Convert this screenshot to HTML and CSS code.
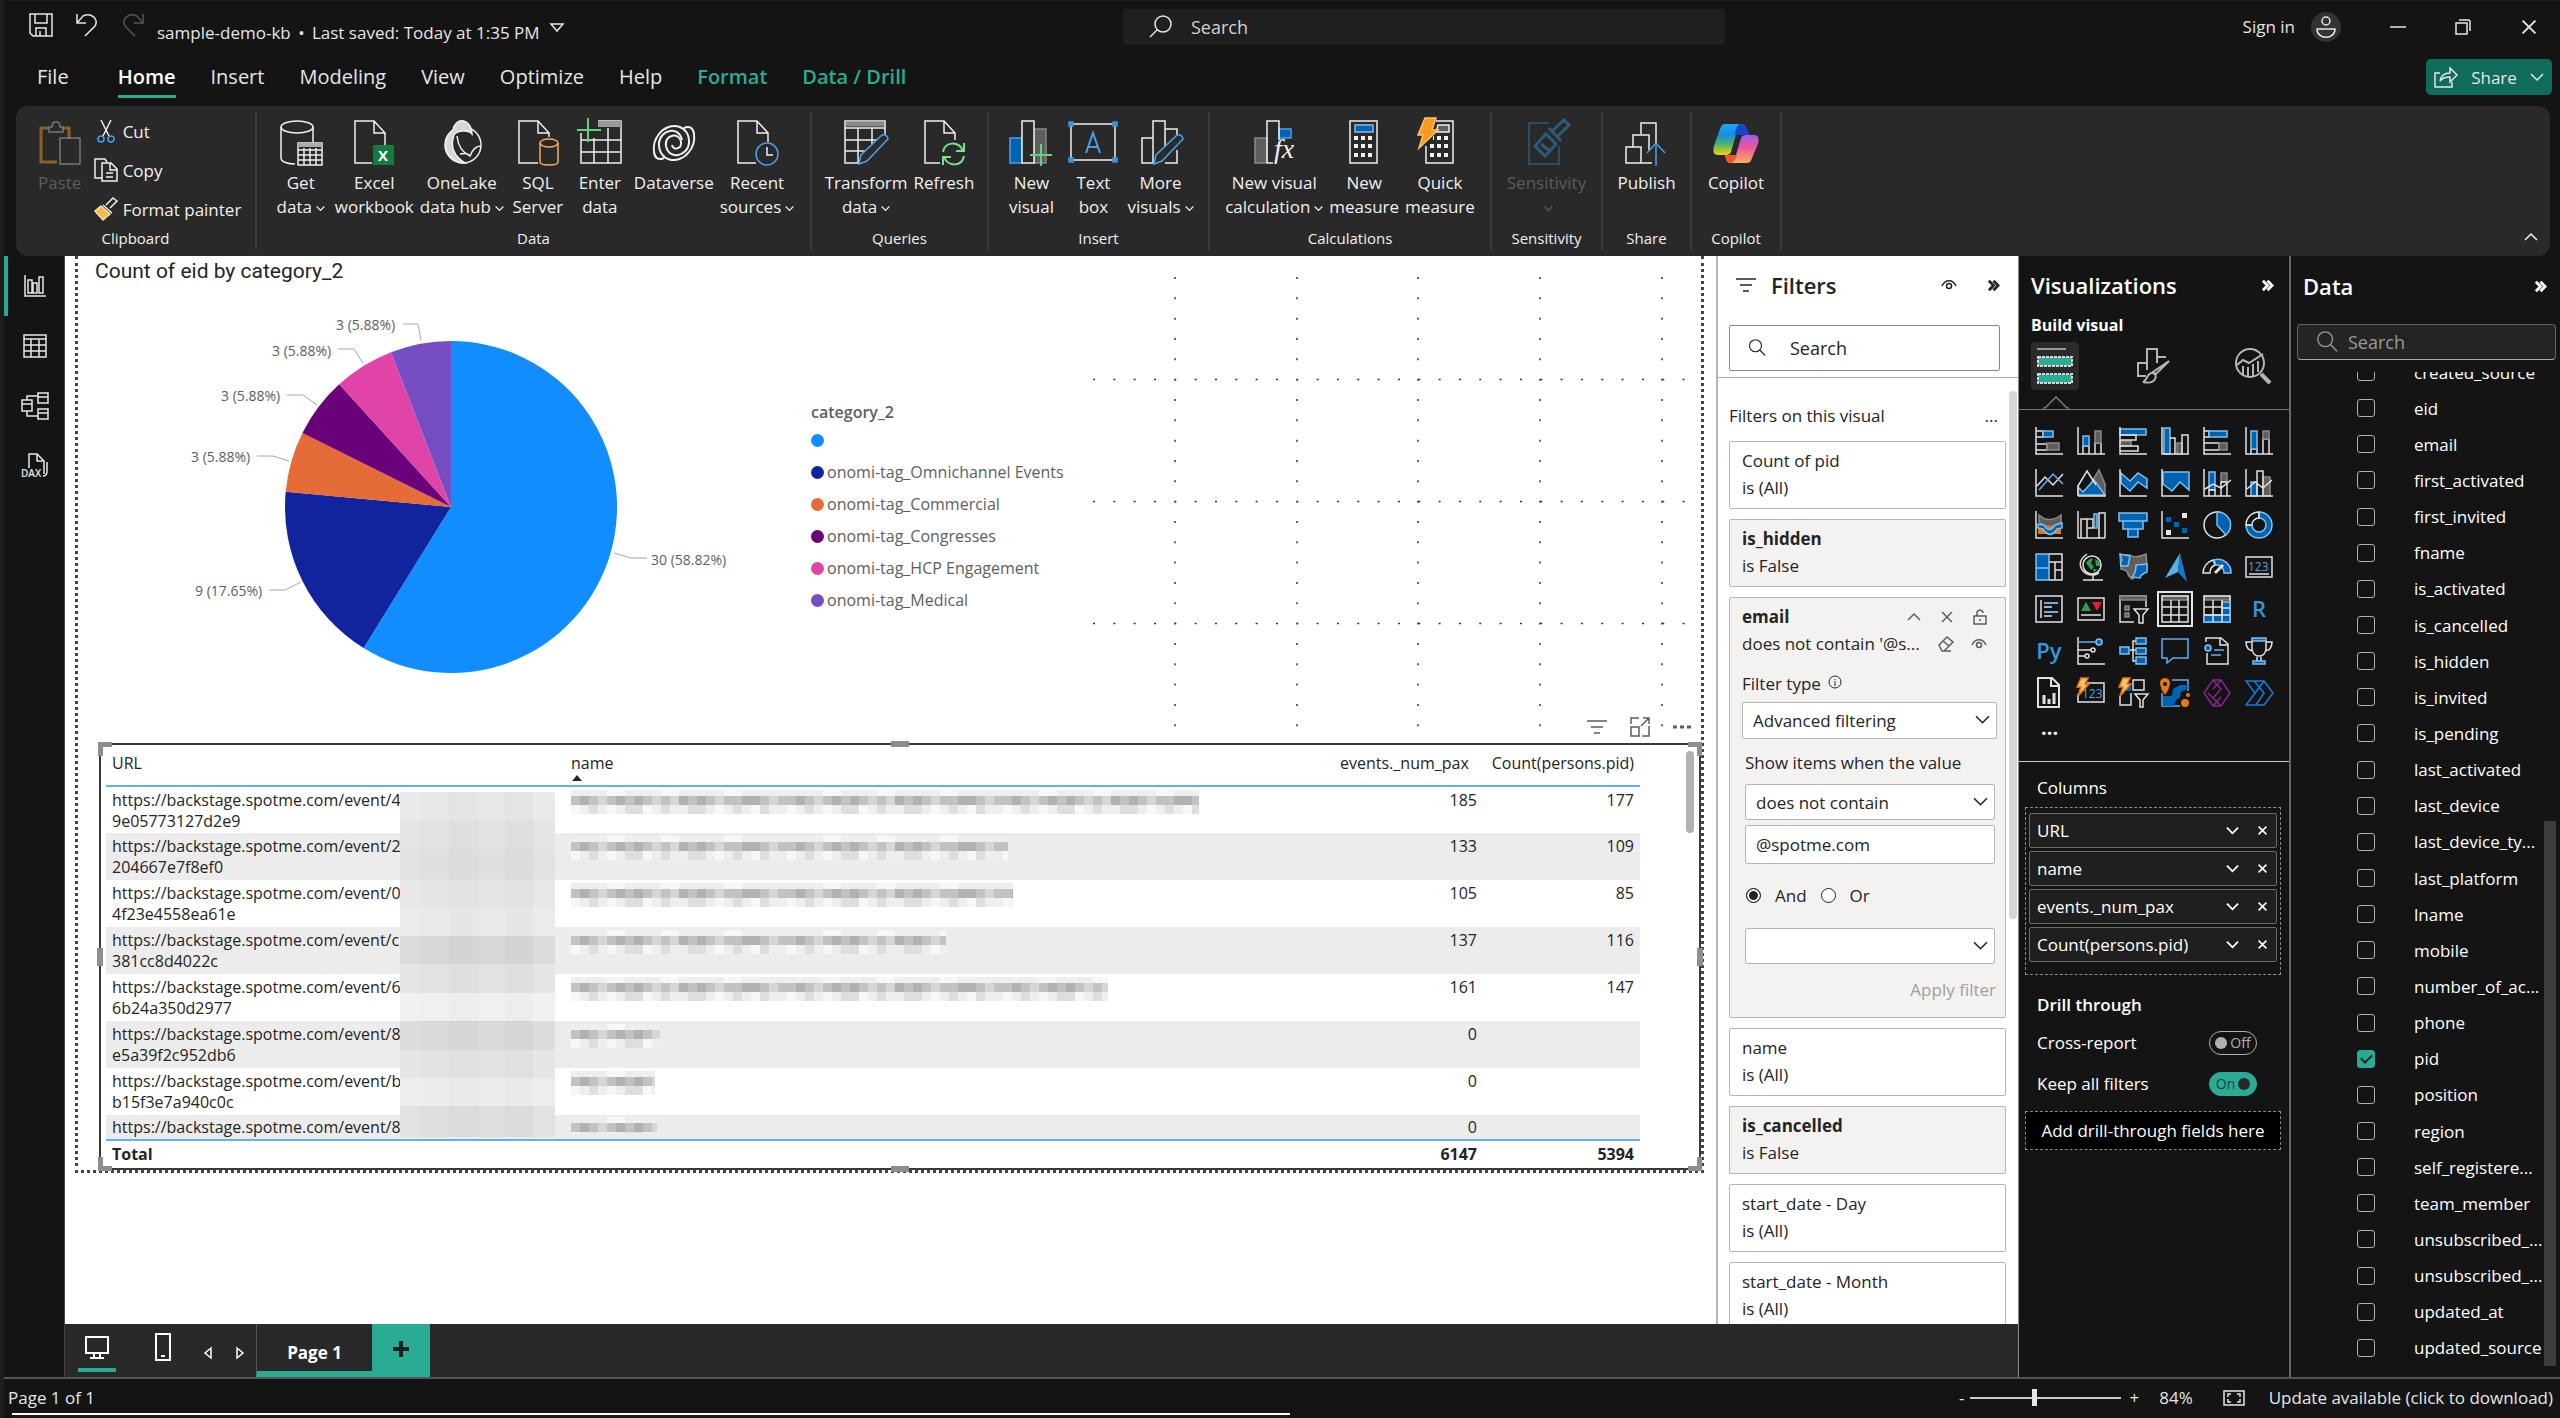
FILE: index.html
```html
<!DOCTYPE html>
<html lang="en">
<head>
    <meta charset="UTF-8">
    <meta name="viewport" content="width=device-width, initial-scale=1.0">
    <title>sample-demo-kb</title>
    <link rel="stylesheet" href="styles.css">
</head>
<body>
    <!-- Shared symbols -->
    <svg class="defs" aria-hidden="true">
        <symbol id="chevron" viewBox="0 0 14 14"><path d="M1 4l6 6 6-6"/></symbol>
        <symbol id="close" viewBox="0 0 14 14"><path d="M2 2l10 10M12 2L2 12"/></symbol>
        <symbol id="collapse" viewBox="0 0 14 14"><path d="M2 2l5 5-5 5M7 2l5 5-5 5"/></symbol>
        <symbol id="lens" viewBox="0 0 24 24"><circle cx="10" cy="9" r="8"/><path d="M16 15l7 7"/></symbol>
        <symbol id="eye" viewBox="0 0 16 12"><path d="M1 7c3-7 11-7 14 0"/><circle cx="8" cy="7" r="2.5"/></symbol>
        <symbol id="funnel" viewBox="0 0 20 16"><path d="M0 2h20M4 8h12M7 14h6"/></symbol>
        <symbol id="bolt" viewBox="0 0 14 20"><path d="M5 1h7l-3 6h4L2 19l3-9H1z"/></symbol>
        <pattern id="mosaic" width="216" height="24" patternUnits="userSpaceOnUse">
            <g class="cells">
                <rect width="216" height="24" fill="#eeeeee"/>
                <rect y="6" width="216" height="9" fill="#c4c2c1"/>
                <path fill="#b2b0b0" d="M9 6h9v9H9zM45 6h9v9h-9zM63 6h9v9h-9zM108 6h9v9h-9zM126 6h9v9h-9zM171 6h18v9h-18z"/>
                <path fill="#d8d6d4" d="M27 6h9v9h-9zM81 6h9v9h-9zM99 6h9v9h-9zM144 6h9v9h-9zM198 6h9v9h-9z"/>
                <path fill="#dedede" d="M18 15h9v9h-9zM54 15h18v9H54zM90 15h9v9h-9zM117 15h18v9h-18zM162 15h9v9h-9zM189 15h9v9h-9z"/>
                <path fill="#f7f7f7" d="M0 15h9v9H0zM36 15h9v9h-9zM72 15h9v9h-9zM144 15h9v9h-9zM180 15h9v9h-9zM36 0h18v6H36zM90 0h18v6H90zM153 0h18v6h-18z"/>
            </g>
        </pattern>
        <linearGradient id="cp1" x1="0" y1="0" x2="0" y2="1"><stop offset="0" stop-color="#1ea7f5"/><stop offset=".35" stop-color="#1b8be0"/><stop offset=".65" stop-color="#4fb36b"/><stop offset="1" stop-color="#f4cf17"/></linearGradient>
        <linearGradient id="cp2" x1="0" y1="0" x2="0" y2="1"><stop offset="0" stop-color="#a35bf0"/><stop offset=".45" stop-color="#ee559b"/><stop offset="1" stop-color="#ffb05e"/></linearGradient>
    </svg>

    <header class="title-bar">
        <div class="quick-access">
            <button class="icon-btn" aria-label="Save"><svg width="24" height="24" viewBox="0 0 24 24"><path d="M1 1h22v22H4l-3-3zM6 1v9h12V1M7 23v-8h10v8M11 18v5"/></svg></button>
            <button class="icon-btn" aria-label="Undo"><svg width="24" height="24" viewBox="0 0 24 24"><path d="M2 1v9h9M2 10l6-7c8-4 16 3 12 10L10 23"/></svg></button>
            <button class="icon-btn dim" aria-label="Redo"><svg width="24" height="24" viewBox="0 0 24 24"><path d="M22 1v9h-9M22 10l-6-7C8-1 0 6 4 13l10 10"/></svg></button>
        </div>
        <div class="doc-name">sample-demo-kb <span class="bullet">•</span> Last saved: Today at 1:35 PM
            <svg width="14" height="10" viewBox="0 0 14 10"><path d="M1 1h12L7 8z"/></svg>
        </div>
        <label class="top-search"><svg class="flip" width="24" height="24"><use href="#lens"/></svg><input type="text" placeholder="Search" aria-label="Search"></label>
        <div class="window-controls">
            <a href="#" class="sign-in">Sign in</a>
            <span class="avatar"><svg width="30" height="30" viewBox="0 0 30 30"><circle cx="15" cy="9" r="4"/><path d="M6 17h18c0 11-18 11-18 0z"/></svg></span>
            <button class="icon-btn" aria-label="Minimize"><svg width="16" height="16" viewBox="0 0 16 16"><path d="M0 8h16"/></svg></button>
            <button class="icon-btn" aria-label="Restore"><svg width="16" height="16" viewBox="0 0 16 16"><path d="M1 4h11v11H1zM4 1h9q2 0 2 2v9"/></svg></button>
            <button class="icon-btn" aria-label="Close"><svg width="18" height="18"><use href="#close"/></svg></button>
        </div>
    </header>

    <nav class="menu">
        <a href="#">File</a>
        <a href="#" class="active">Home</a>
        <a href="#">Insert</a>
        <a href="#">Modeling</a>
        <a href="#">View</a>
        <a href="#">Optimize</a>
        <a href="#">Help</a>
        <a href="#" class="context">Format</a>
        <a href="#" class="context">Data / Drill</a>
        <button class="share-btn"><svg width="24" height="22" viewBox="0 0 24 22"><path d="M6 7H1v14h17v-5M6 15c1-6 5-8 10-8V2l7 7-7 7v-5c-5 0-8 1-10 4z"/></svg>Share<svg width="14" height="14"><use href="#chevron"/></svg></button>
    </nav>

    <section class="ribbon">
        <div class="group clipboard">
            <div class="tools">
                <button class="tool disabled"><svg width="44" height="46" viewBox="0 0 44 46"><path d="M10 8H3v34h16M24 8h7v11" stroke="#8a6127" stroke-width="3"/><path d="M11 12V7h3c0-7 8-7 8 0h3v5zM22 18h20v26H22z" stroke="#777"/></svg><span>Paste</span></button>
                <div class="stack">
                    <button class="row-tool"><svg width="24" height="24" viewBox="0 0 24 24"><path d="M7 1l8 16M17 1L9 17"/><circle cx="7" cy="20" r="3" stroke="#4aa0e6"/><circle cx="17" cy="20" r="3" stroke="#4aa0e6"/></svg>Cut</button>
                    <button class="row-tool"><svg width="24" height="24" viewBox="0 0 24 24"><path d="M8 20H1V1h10l2 3M8 5h9l6 6v12H8zM16 5v7h7M12 15h7M12 19h7"/></svg>Copy</button>
                    <button class="row-tool"><svg width="24" height="24" viewBox="0 0 24 24"><path d="M12 8l7-7 4 3-7 7M9 8l9 8"/><path d="M7 9l9 8-7 6-8-9z" fill="#f5b94d" stroke="#fbe3b4"/></svg>Format painter</button>
                </div>
            </div>
            <h3>Clipboard</h3>
        </div>
        <div class="group data">
            <div class="tools">
                <button class="tool"><svg width="44" height="46" viewBox="0 0 44 46"><ellipse cx="18" cy="7" rx="16" ry="6"/><path d="M2 7v31c0 4 7 6 14 6M34 7v15"/><path d="M19 23h24v22H19zM19 30h24M19 35h24M19 40h24M25 28v17M31 28v17M37 28v17"/><path d="M19 25h24" stroke-width="4" stroke="#aaa"/></svg><span>Get<br>data<svg class="caret"><use href="#chevron"/></svg></span></button>
                <button class="tool"><svg width="44" height="46" viewBox="0 0 44 46"><path d="M20 43H3V1h19l11 12v12M22 1v12h11"/><path d="M21 25h21v20H21z" fill="#107c41" stroke="none"/><text x="26" y="41" class="badge-letter">X</text></svg><span>Excel<br>workbook</span></button>
                <button class="tool"><svg width="44" height="46" viewBox="0 0 44 46"><circle cx="23" cy="25" r="18"/><path d="M13 10c-10 8-10 22 0 29 5 4 10 4 12 4C14 36 10 26 14 15c2-4 14-6 18-1-1-17-17-17-19-4z" fill="#d6d6d6"/><path d="M17 16c1 10 6 17 13 20 3-8 8-10 11-10M20 34c4-1 8-1 10 2"/></svg><span>OneLake<br>data hub<svg class="caret"><use href="#chevron"/></svg></span></button>
                <button class="tool"><svg width="44" height="46" viewBox="0 0 44 46"><path d="M22 43H3V1h19l11 12v4M22 1v12h11"/><ellipse cx="33" cy="23" rx="9" ry="4" stroke="#f3ad57"/><path d="M24 23v19c0 4 18 4 18 0V23" stroke="#f3ad57"/></svg><span>SQL<br>Server</span></button>
                <button class="tool"><svg width="44" height="46" viewBox="0 0 44 46"><path d="M3 13v30h40V1H20M3 20h40M3 32h40M16 18v25M30 8v35"/><path d="M20 4h23" stroke="#999" stroke-width="6"/><path d="M10-2v24M-1 10h24" stroke="#62d27c" stroke-width="2"/></svg><span>Enter<br>data</span></button>
                <button class="tool"><svg width="44" height="46" viewBox="0 0 44 46"><path d="M12 38C0 44-1 24 7 14 18 0 38 5 37 23c-1 13-20 18-23 3-2-12 14-14 15-4 1 7-8 9-9 3" stroke-width="2"/><path d="M32 8c12-6 13 14 5 24C26 46 6 41 7 23 8 10 27 5 30 20" stroke-width="2"/></svg><span>Dataverse</span></button>
                <button class="tool"><svg width="44" height="46" viewBox="0 0 44 46"><path d="M21 43H3V1h19l11 12v9M22 1v12h11"/><circle cx="32" cy="34" r="11" stroke="#4aa0e6"/><path d="M32 27v8h6"/></svg><span>Recent<br>sources<svg class="caret"><use href="#chevron"/></svg></span></button>
            </div>
            <h3>Data</h3>
        </div>
        <div class="group queries">
            <div class="tools">
                <button class="tool"><svg width="44" height="46" viewBox="0 0 44 46"><path d="M17 43H1V1h40v16M1 8h40M1 20h38M1 31h22M14 8v35M28 8v18"/><path d="M2 4h38" stroke="#888" stroke-width="5"/><path d="M15 44l2-9 21-20q5-1 6 4L23 41z" fill="#2b2b2b" stroke="#4aa0e6"/></svg><span>Transform<br>data<svg class="caret"><use href="#chevron"/></svg></span></button>
                <button class="tool"><svg width="44" height="46" viewBox="0 0 44 46"><path d="M18 43H3V1h19l11 12v7M22 1v12h11"/><path d="M21 32c2-11 16-11 20-1M42 23v8h-8M42 36c-2 11-16 11-20 1M21 45v-8h8" stroke="#7be08a" stroke-width="2"/></svg><span>Refresh</span></button>
            </div>
            <h3>Queries</h3>
        </div>
        <div class="group insert">
            <div class="tools">
                <button class="tool"><svg width="44" height="46" viewBox="0 0 44 46"><path d="M1 18h12v25H1z" fill="#0063b1" stroke="#4aa0e6"/><path d="M25 9h12v34H25z" fill="#605e5c" stroke="#888"/><path d="M13 1h12v42H13z" fill="#292929"/><path d="M32 24v22M21 35h22" stroke="#62d27c" stroke-width="2"/></svg><span>New<br>visual</span></button>
                <button class="tool"><svg width="44" height="46" viewBox="0 0 44 46"><path d="M0 4h44v36H0z"/><path d="M15 33l7-20 7 20M17 27h10" stroke="#4aa0e6" stroke-width="2"/><path d="M-2 2h4v4h-4zM42 2h4v4h-4zM-2 38h4v4h-4zM42 38h4v4h-4z" fill="#3a96dd" stroke="#3a96dd"/></svg><span>Text<br>box</span></button>
                <button class="tool"><svg width="44" height="46" viewBox="0 0 44 46"><path d="M14 43H3V18h11M14 43V1h12v26M26 9h12v8M38 30v13H26"/><path d="M15 44l2-9 21-20q5-1 6 4L23 41z" fill="#2b2b2b" stroke="#4aa0e6"/></svg><span>More<br>visuals<svg class="caret"><use href="#chevron"/></svg></span></button>
            </div>
            <h3>Insert</h3>
        </div>
        <div class="group calculations">
            <div class="tools">
                <button class="tool"><svg width="44" height="46" viewBox="0 0 44 46"><path d="M3 18h12v25H3z" fill="#605e5c" stroke="#888"/><path d="M27 9h12v9H27z" fill="#0063b1" stroke="#4aa0e6"/><path d="M15 43V1h12v19M15 43h6"/><text x="22" y="38" class="fx">fx</text></svg><span>New visual<br>calculation<svg class="caret"><use href="#chevron"/></svg></span></button>
                <button class="tool"><svg width="44" height="46" viewBox="0 0 44 46"><path d="M8 1h27v42H8z"/><path d="M13 5h18v7H13z" fill="#0063b1" stroke="#83beec"/><path d="M12 18h4m3 0h4m3 0h4M12 26h4m3 0h4m3 0h4M12 35h4m3 0h4m3 0h4" stroke-width="4"/></svg><span>New<br>measure</span></button>
                <button class="tool"><svg width="44" height="46" viewBox="0 0 44 46"><path d="M18 1h17v42H8V26"/><path d="M20 5h11v7H18z" fill="#605e5c"/><path d="M15 18h1m3 0h4m3 0h4M12 26h4m3 0h4m3 0h4M12 35h4m3 0h4m3 0h4" stroke-width="4"/><path d="M7-2h11l-4 12h6L1 28l4-13H0z" fill="#f59b23" stroke="#ffc36b"/></svg><span>Quick<br>measure</span></button>
            </div>
            <h3>Calculations</h3>
        </div>
        <div class="group sensitivity">
            <div class="tools">
                <button class="tool disabled"><svg width="44" height="46" viewBox="0 0 44 46"><path d="M34 26v18H4V3h20" stroke="#2c5a7a"/><path d="M10 26l11-12 10 10-11 12zM16 24l10 8M27 11l12-11 5 5-12 12M24 8l12 13" stroke="#2c5a7a" stroke-width="3"/></svg><span>Sensitivity<br><svg class="caret"><use href="#chevron"/></svg></span></button>
            </div>
            <h3>Sensitivity</h3>
        </div>
        <div class="group share">
            <div class="tools">
                <button class="tool"><svg width="44" height="46" viewBox="0 0 44 46"><path d="M17 14V3h15v20M9 27V15h16v15M2 43V27h15v16zM17 43h11"/><path d="M32 46V25M23 33l9-10 9 10" stroke="#4aa0e6"/></svg><span>Publish</span></button>
            </div>
            <h3>Share</h3>
        </div>
        <div class="group copilot">
            <div class="tools">
                <button class="tool"><svg width="46" height="46" viewBox="0 0 46 46"><path d="M13 4h15c4 0 5 3 6 7l1 4H23l-5 17c-1 2-2 3-5 3H5c-5 0-5-4-4-9l6-17c1-3 2-5 6-5z" fill="url(#cp1)" stroke="none"/><path d="M28 4c-4 0-5 4-6 11h15l-3-6c-1-4-3-5-6-5z" fill="#1745c9" stroke="none"/><path d="M33 43H18c-4 0-5-3-6-8h11l5-17c1-2 2-3 5-3h8c5 0 5 4 4 9l-6 14c-1 3-2 5-6 5z" fill="url(#cp2)" stroke="none"/><path d="M12 35c1 5 2 8 6 8 3 0 4-4 6-8z" fill="#f2542d" stroke="none"/><path d="M24 15h4l-6 20h-4z" fill="#292929" stroke="none"/></svg><span>Copilot</span></button>
            </div>
            <h3>Copilot</h3>
        </div>
        <button class="collapse-ribbon" aria-label="Collapse ribbon"><svg class="up" width="14" height="14"><use href="#chevron"/></svg></button>
    </section>

    <main class="main">
        <nav class="rail">
            <a href="#" class="active" aria-label="Report view"><svg width="24" height="24" viewBox="0 0 24 24"><path d="M2 1v21h21M5 19V6h4v13zM10 19V9h4v10zM16 19V3h4v16z"/></svg></a>
            <a href="#" aria-label="Table view"><svg width="24" height="24" viewBox="0 0 24 24"><path d="M1 1h22v22H1zM1 5h22M1 11h22M1 17h22M8 5v18M16 5v18"/></svg></a>
            <a href="#" aria-label="Model view"><svg width="28" height="28" viewBox="0 0 28 28"><path d="M1 8h10v11H1zM1 12h10M17 1h10v10H17zM17 5h10M17 17h10v10H17zM17 21h10M6 8V4h11M6 19v5h11"/></svg></a>
            <a href="#" aria-label="DAX query view"><svg width="28" height="28" viewBox="0 0 28 28"><path d="M8 16V2h8l7 7v13M16 2v7h6M26 10v9q0 5-4 5"/><text x="0" y="25" class="dax">DAX</text></svg></a>
        </nav>

        <div class="workspace">
            <div class="work-row">
                <div class="canvas">
                    <div class="report-page">
                        <div class="page-top">
                            <div class="pie-visual">
                                <h2>Count of eid by category_2</h2>
                                <svg class="pie" width="712" height="440" viewBox="79 286 712 440">
                                    <path fill="#118dff" d="M452 507V341A166 166 0 1 1 364.6 648.1z"/>
                                    <path fill="#12239e" d="M452 507L364.6 648.1A166 166 0 0 1 286.7 491.7z"/>
                                    <path fill="#e66c37" d="M452 507L286.7 491.7A166 166 0 0 1 303.4 433z"/>
                                    <path fill="#6b007b" d="M452 507L303.4 433A166 166 0 0 1 340.2 384.3z"/>
                                    <path fill="#e044a7" d="M452 507L340.2 384.3A166 166 0 0 1 392 352.2z"/>
                                    <path fill="#744ec2" d="M452 507L392 352.2A166 166 0 0 1 452 341z"/>
                                    <path class="leader" d="M404 324h15l3 16M339 349h16l9 14M288 395h16l14 10M258 456h16l16 5M270 590h16l16-8M615 553l17 5h16"/>
                                    <text x="337" y="330">3 (5.88%)</text>
                                    <text x="273" y="356">3 (5.88%)</text>
                                    <text x="222" y="401">3 (5.88%)</text>
                                    <text x="192" y="462">3 (5.88%)</text>
                                    <text x="196" y="596">9 (17.65%)</text>
                                    <text x="652" y="565">30 (58.82%)</text>
                                </svg>
                            </div>
                            <div class="legend">
                                <h4>category_2</h4>
                                <ul>
                                    <li class="c1">&nbsp;</li>
                                    <li class="c2">onomi-tag_Omnichannel Events</li>
                                    <li class="c3">onomi-tag_Commercial</li>
                                    <li class="c4">onomi-tag_Congresses</li>
                                    <li class="c5">onomi-tag_HCP Engagement</li>
                                    <li class="c6">onomi-tag_Medical</li>
                                </ul>
                            </div>
                            <svg class="map-grid" width="614" height="488" viewBox="0 0 614 488">
                                <path d="M88 21v450M210 21v450M331 21v450M453 21v450M575 21v450M6 123.500h592M6 245.500h592M6 367.500h592"/>
                            </svg>
                        </div>

                        <div class="table-visual">
                            <div class="visual-header">
                                <svg width="20" height="16"><use href="#funnel"/></svg>
                                <svg width="20" height="20" viewBox="0 0 20 20"><path d="M9 1H1v6M19 9v10h-7M1 10h8v9H1zM11 9l8-8M13 1h6v6"/></svg>
                                <svg width="18" height="4" viewBox="0 0 18 4"><path d="M0 2h4m3 0h4m3 0h4" stroke-width="3"/></svg>
                            </div>
                            <table>
                                <thead>
                                    <tr><th class="url">URL</th><th class="name">name<i class="sort"></i></th><th class="num head-pax">events._num_pax</th><th class="num">Count(persons.pid)</th></tr>
                                </thead>
                                <tbody>
                                    <tr><td>https://backstage.spotme.com/event/4<br>9e05773127d2e9</td><td><svg class="redacted" width="628" height="24"><rect width="100%" height="24" fill="url(#mosaic)"/></svg></td><td class="num">185</td><td class="num">177</td></tr>
                                    <tr><td>https://backstage.spotme.com/event/2<br>204667e7f8ef0</td><td><svg class="redacted" width="437" height="24"><rect width="100%" height="24" fill="url(#mosaic)"/></svg></td><td class="num">133</td><td class="num">109</td></tr>
                                    <tr><td>https://backstage.spotme.com/event/0<br>4f23e4558ea61e</td><td><svg class="redacted" width="442" height="24"><rect width="100%" height="24" fill="url(#mosaic)"/></svg></td><td class="num">105</td><td class="num">85</td></tr>
                                    <tr><td>https://backstage.spotme.com/event/c<br>381cc8d4022c</td><td><svg class="redacted" width="375" height="24"><rect width="100%" height="24" fill="url(#mosaic)"/></svg></td><td class="num">137</td><td class="num">116</td></tr>
                                    <tr><td>https://backstage.spotme.com/event/6<br>6b24a350d2977</td><td><svg class="redacted" width="537" height="24"><rect width="100%" height="24" fill="url(#mosaic)"/></svg></td><td class="num">161</td><td class="num">147</td></tr>
                                    <tr><td>https://backstage.spotme.com/event/8<br>e5a39f2c952db6</td><td><svg class="redacted" width="89" height="24"><rect width="100%" height="24" fill="url(#mosaic)"/></svg></td><td class="num">0</td><td></td></tr>
                                    <tr><td>https://backstage.spotme.com/event/b<br>b15f3e7a940c0c</td><td><svg class="redacted" width="84" height="24"><rect width="100%" height="24" fill="url(#mosaic)"/></svg></td><td class="num">0</td><td></td></tr>
                                    <tr class="cut"><td>https://backstage.spotme.com/event/8</td><td><svg class="redacted" width="86" height="16"><rect width="100%" height="16" fill="url(#mosaic)"/></svg></td><td class="num">0</td><td></td></tr>
                                </tbody>
                                <tfoot>
                                    <tr><td>Total</td><td></td><td class="num">6147</td><td class="num">5394</td></tr>
                                </tfoot>
                            </table>
                            <svg class="url-mask" width="155" height="345" viewBox="0 0 155 345">
                                <path fill="#e5e7e9" d="M0 0h155v29H0z"/><path fill="#e2e2e1" d="M0 29h155v29H0z"/><path fill="#e0dfde" d="M0 58h155v29H0z"/><path fill="#e5e5e5" d="M0 87h155v28H0z"/>
                                <path fill="#e9e9e9" d="M0 115h155v29H0z"/><path fill="#d8d7d6" d="M0 144h155v28H0z"/><path fill="#e2e2e2" d="M0 172h155v29H0z"/><path fill="#f0f0f0" d="M0 201h155v28H0z"/>
                                <path fill="#d9d9d9" d="M0 229h155v29H0z"/><path fill="#e3e3e3" d="M0 258h155v28H0z"/><path fill="#ececeb" d="M0 286h155v28H0z"/><path fill="#dddee0" d="M0 314h155v31H0z"/>
                                <path fill="#fff" fill-opacity=".12" d="M0 0h20v345H0zM133 0h22v345h-22z"/><path fill="#000" fill-opacity=".01" d="M49 0h29v345H49zM105 0h28v345h-28z"/>
                            </svg>
                            <i class="thumb"></i>
                            <i class="handle tl"></i><i class="handle tr"></i><i class="handle bl"></i><i class="handle br"></i>
                            <i class="handle top"></i><i class="handle bottom"></i><i class="handle left"></i><i class="handle right"></i>
                        </div>
                    </div>
                </div>

                <aside class="filters">
                    <div class="filters-head">
                        <div class="pane-title"><svg width="20" height="16"><use href="#funnel"/></svg><h2>Filters</h2><svg width="16" height="12"><use href="#eye"/></svg><button class="icon-btn" aria-label="Collapse filters"><svg width="13" height="13"><use href="#collapse"/></svg></button></div>
                        <label class="filter-search"><svg width="18" height="18"><use href="#lens"/></svg><input type="text" placeholder="Search" aria-label="Search filters"></label>
                    </div>
                    <div class="filters-body">
                        <div class="section-label"><span>Filters on this visual</span><span>...</span></div>
                        <div class="card"><p>Count of pid</p><p>is (All)</p></div>
                        <div class="card set"><p>is_hidden</p><p>is False</p></div>
                        <div class="card set open">
                            <div class="card-line"><p>email</p><svg class="up" width="14" height="14"><use href="#chevron"/></svg><svg width="14" height="14"><use href="#close"/></svg><svg width="14" height="16" viewBox="0 0 14 16"><path d="M1 7h12v8H1zM4 7V3q3-4 6 0v1M7 10v2"/></svg></div>
                            <div class="card-line second"><p>does not contain '@s...</p><svg width="16" height="16" viewBox="0 0 16 16"><path d="M1 9l8-8 6 5-9 9H4zM5 5l6 5M5 15h8"/></svg><svg width="16" height="12"><use href="#eye"/></svg></div>
                            <label class="field-label" for="filterType">Filter type <svg width="15" height="15" viewBox="0 0 15 15"><circle cx="7" cy="7" r="6"/><path d="M7 4v1M7 6v5"/></svg></label>
                            <div class="select"><select id="filterType"><option>Advanced filtering</option></select><svg width="15" height="15"><use href="#chevron"/></svg></div>
                            <div class="condition">
                                <label class="field-label" for="op1">Show items when the value</label>
                                <div class="select"><select id="op1"><option>does not contain</option></select><svg width="15" height="15"><use href="#chevron"/></svg></div>
                                <input class="value" type="text" value="@spotme.com" aria-label="Value">
                                <div class="radios"><label><input type="radio" name="join" checked>And</label><label><input type="radio" name="join">Or</label></div>
                                <div class="select"><select aria-label="Second condition"><option></option></select><svg width="15" height="15"><use href="#chevron"/></svg></div>
                                <button class="apply" disabled>Apply filter</button>
                            </div>
                        </div>
                        <div class="card"><p>name</p><p>is (All)</p></div>
                        <div class="card set"><p>is_cancelled</p><p>is False</p></div>
                        <div class="card"><p>start_date - Day</p><p>is (All)</p></div>
                        <div class="card"><p>start_date - Month</p><p>is (All)</p></div>
                        <i class="pane-thumb"></i>
                    </div>
                </aside>
            </div>

            <footer class="page-tabs">
                <button class="layout-btn active" aria-label="Desktop layout"><svg width="26" height="26" viewBox="0 0 26 26"><path d="M2 2h22v16H2zM10 18v5M16 18v5M6 23h14" stroke-width="2"/></svg></button>
                <button class="layout-btn phone" aria-label="Mobile layout"><svg width="16" height="28" viewBox="0 0 16 28"><path d="M1 1h14v26H1zM6 23h4" stroke-width="2"/></svg></button>
                <button class="arrow" aria-label="Previous page"><svg width="8" height="12" viewBox="0 0 8 12"><path d="M7 1v10L1 6z"/></svg></button>
                <button class="arrow" aria-label="Next page"><svg width="8" height="12" viewBox="0 0 8 12"><path d="M1 1v10l6-5z"/></svg></button>
                <button class="page-tab">Page 1</button>
                <button class="add-page" aria-label="New page"><svg width="16" height="16" viewBox="0 0 16 16"><path d="M8 0v16M0 8h16" stroke-width="4"/></svg></button>
            </footer>
        </div>

        <aside class="viz">
            <div class="pane-title"><h2>Visualizations</h2><button class="icon-btn" aria-label="Collapse visualizations"><svg width="13" height="13"><use href="#collapse"/></svg></button></div>
            <h3>Build visual</h3>
            <div class="viz-tabs">
                <button class="active" aria-label="Build visual"><svg width="36" height="36" viewBox="0 0 36 36"><path d="M0 1h29" stroke="#999" stroke-width="2"/><path d="M1 9h34v9H1zM1 26h34v9H1z" fill="#2aac94" stroke="#d6d6d6" stroke-width="2" stroke-dasharray="3 1"/></svg></button>
                <button aria-label="Format visual"><svg width="34" height="36" viewBox="0 0 34 36"><path d="M9 28H1V15h9M10 22V1h10v14M20 9h9" stroke-width="2"/><path d="M32 13L19 26l-3-2zM15 25c3 0 5 3 3 6-2 4-8 4-12 3 4-1 4-9 9-9z" stroke-width="2"/></svg></button>
                <button aria-label="Analytics"><svg width="36" height="36" viewBox="0 0 36 36"><circle cx="15" cy="15" r="14" stroke-width="2"/><path d="M2 17l6-5 6 3 14-9M8 18v9M13 19v9M18 16v12M23 13v11" stroke-width="2"/><path d="M26 26l9 9" stroke-width="4"/></svg></button>
            </div>
            <svg class="notch" width="26" height="13" viewBox="0 0 26 13"><path d="M0 12h2L13 1l11 11h2"/></svg>
            <div class="viz-grid">
                <button aria-label="Stacked bar"><svg viewBox="0 0 28 28"><path d="M1 0v27h27M1 4h7v6H1M1 17h11v6H1"/><path class="b" d="M8 4h10v6H8z"/><path class="g" d="M12 16h12v7H12z"/></svg></button>
                <button aria-label="Stacked column"><svg viewBox="0 0 28 28"><path d="M1 0v27h27M6 27v-8h6v8M18 27V16h6v11"/><path class="b" d="M6 9h6v10H6z"/><path class="g" d="M18 4h6v12h-6z"/></svg></button>
                <button aria-label="Clustered bar"><svg viewBox="0 0 28 28"><path class="b" d="M1 2h26v6H1z"/><path class="g" d="M1 14h11v5H1z"/><path d="M1 0v27h27M1 8h16v5H1M1 19h18v5H1"/></svg></button>
                <button aria-label="Clustered column"><svg viewBox="0 0 28 28"><path class="b" d="M3 1h6v26H3z"/><path class="g" d="M16 16h5v11h-5z"/><path d="M1 0v27h27M9 11h5v16M21 27V8h6v19"/></svg></button>
                <button aria-label="100% stacked bar"><svg viewBox="0 0 28 28"><path d="M1 0v27h27M1 4h5v6H1M1 16h15v7H1"/><path class="b" d="M6 4h18v6H6z"/><path class="g" d="M16 16h8v7h-8z"/></svg></button>
                <button aria-label="100% stacked column"><svg viewBox="0 0 28 28"><path d="M1 0v27h27M6 27v-5h6v5M18 27V12h6v15"/><path class="b" d="M6 4h6v18H6z"/><path class="g" d="M18 4h6v8h-6z"/></svg></button>

                <button aria-label="Line"><svg viewBox="0 0 28 28"><path d="M1 0v27h27M2 17l8-9 8 8L28 5"/><path class="bs" d="M4 21L18 5l10 10"/></svg></button>
                <button aria-label="Area"><svg viewBox="0 0 28 28"><path class="g" d="M13 16l9-15 6 14v12z"/><path class="b" d="M1 18l5 5 11-12 11 15H1z"/><path d="M1 27V17L10 2l9 14M1 27h27"/></svg></button>
                <button aria-label="Stacked area"><svg viewBox="0 0 28 28"><path class="b" d="M2 4l9 8 8-8 9 6v9l-9-6-8 9-9-8z"/><path d="M1 0v27h27"/></svg></button>
                <button aria-label="100% stacked area"><svg viewBox="0 0 28 28"><path class="b" d="M2 3h26v18l-9-8-8 9-9-7z"/><path d="M1 0v27h27"/></svg></button>
                <button aria-label="Line and stacked column"><svg viewBox="0 0 28 28"><path class="b" d="M6 3h6v18H6z"/><path class="g" d="M18 4h6v9h-6z"/><path d="M1 0v27h27M6 27v-6h6v6M18 27V13h6v14M2 20l8-5 8 4 10-8"/></svg></button>
                <button aria-label="Line and clustered column"><svg viewBox="0 0 28 28"><path class="b" d="M6 13h6v14H6z"/><path class="g" d="M18 8h7v19h-7z"/><path d="M1 0v27h27M12 27V2h6v25M2 20l8-7 8 6 9-8"/></svg></button>

                <button aria-label="Ribbon"><svg viewBox="0 0 28 28"><path class="g" d="M4 4q10 9 22 0v7q-11 9-22 0z"/><path fill="#e8770a" stroke="none" d="M3 15h23v8H3z"/><path class="b" d="M3 13l6 1q5 9 11 0l7-2v5l-5 1q-7 11-14 0l-5-1z"/><path d="M1 0v27h27"/></svg></button>
                <button aria-label="Waterfall"><svg viewBox="0 0 28 28"><path d="M1 0v27h27M4 27V8h6v19M10 8h6v9h-6M22 27V2h6v25"/><path class="b" d="M17 3h3v14h-3z"/></svg></button>
                <button aria-label="Funnel"><svg viewBox="0 0 28 28"><path class="b" d="M0 2h28v8H0zM4 10h20v8H4zM9 18h10v8H9z"/></svg></button>
                <button aria-label="Scatter"><svg viewBox="0 0 28 28"><path d="M1 0v27h27"/><path class="b ns" d="M5 6h5v5H5zM13 11h5v5h-5zM21 17h5v5h-5z"/><path fill="#e6e6e6" stroke="none" d="M21 2h5v5h-5zM5 19h5v5H5z"/></svg></button>
                <button aria-label="Pie"><svg viewBox="0 0 28 28"><circle cx="14" cy="14" r="13"/><path class="b" d="M14 1a13 13 0 0 1 9 23l-9-10z"/></svg></button>
                <button aria-label="Donut"><svg viewBox="0 0 28 28"><path class="b" d="M14 1A13 13 0 1 1 1 14h6a7 7 0 1 0 7-7z"/><path d="M1 14A13 13 0 0 1 14 1v6a7 7 0 0 0-7 7z"/></svg></button>

                <button aria-label="Treemap"><svg viewBox="0 0 28 28"><path class="b" d="M1 1h13v14H1zM1 15h13v12H1z"/><path d="M14 1h13v26H14M14 9h13M20 9v18M20 17h7"/></svg></button>
                <button aria-label="Map"><svg viewBox="0 0 28 28"><circle cx="15" cy="12" r="9"/><path fill="#2f9e4f" stroke="none" d="M9 10q4-6 7-4l-2 4 3 4-3 3zM18 6q6 2 5 7h-4zM16 16h4l-3 4z"/><path d="M10 1Q-1 9 6 18q7 7 16 2M16 22v5M6 27h20"/></svg></button>
                <button aria-label="Filled map"><svg viewBox="0 0 28 28"><path class="g" d="M1 2h10q6 4 16-1l1 12q-2 10-10 10l-5 3q-4-3-5-8l-6-2z"/><path class="b" d="M1 1l10 2-2 10H2q-1-4 1-6zM17 12l11-1v8q-6 2-7 6l-8-1q4-4 4-12z"/></svg></button>
                <button aria-label="Azure map"><svg viewBox="0 0 28 28"><path d="M19 0L4 25l13-6z" fill="#53b1e4" stroke="none"/><path d="M19 0l7 29-9-10z" fill="#1877c9" stroke="none"/></svg></button>
                <button aria-label="Gauge"><svg viewBox="0 0 28 28"><path d="M0 20A14 14 0 0 1 10 7l2 5q-5 2-5 8z"/><path class="b" d="M11 7a13 13 0 0 1 17 13h-7q0-6-6-8l-2 0z"/><path d="M12 20l8-8" stroke-width="3"/></svg></button>
                <button aria-label="Card"><svg viewBox="0 0 28 28"><path d="M1 4h26v20H1zM4 21h20"/><text x="3" y="18" class="t13">123</text></svg></button>

                <button aria-label="Multi-row card"><svg viewBox="0 0 28 28"><path d="M1 1h26v26H1zM6 5v18M9 12h8M9 21h8"/><path class="bs" d="M9 8h14M9 17h14" stroke-width="2"/></svg></button>
                <button aria-label="KPI"><svg viewBox="0 0 28 28"><path d="M1 3h26v22H1zM4 20h20"/><path d="M9 7l5 9H4z" fill="#2f9e4f" stroke="none"/><path d="M15 7h10l-5 9z" fill="#e0202c" stroke="none"/></svg></button>
                <button aria-label="Slicer"><svg viewBox="0 0 28 28"><path d="M15 27H1V1h26v11"/><path class="g" d="M1 1h26v4H1zM6 11h4v4H6zM6 18h4v4H6z"/><path d="M15 14h14l-5 6v8h-4v-8z"/></svg></button>
                <button class="selected" aria-label="Table"><svg viewBox="0 0 28 28"><path class="g" d="M1 1h26v4H1z"/><path d="M1 1h26v26H1zM1 12h26M1 20h26M10 5v22M18 5v22"/></svg></button>
                <button aria-label="Matrix"><svg viewBox="0 0 28 28"><path class="g" d="M1 1h26v4H1z"/><path d="M1 1h26v26H1zM1 12h26M10 5v22"/><path class="b" d="M19 7h8v20H1v-7h18z"/><path d="M1 20h26M19 5v22M10 20v7M19 13h8"/></svg></button>
                <button aria-label="R visual" class="letter">R</button>

                <button aria-label="Python visual" class="letter">Py</button>
                <button aria-label="Key influencers"><svg viewBox="0 0 28 28"><path d="M1 0v27h27M1 13h13M1 19h7"/><path class="bs" d="M1 5h18"/><circle class="b" cx="22" cy="5" r="3"/><circle cx="16" cy="13" r="2"/><circle cx="10" cy="19" r="2"/></svg></button>
                <button aria-label="Decomposition tree"><svg viewBox="0 0 28 28"><path d="M11 13h6M17 4h-3v20h3"/><path class="b" d="M1 10h9v7H1zM17 1h10v6H17zM17 11h10v6H17zM17 20h10v7H17z"/></svg></button>
                <button aria-label="Q&amp;A"><svg viewBox="0 0 28 28"><path class="bs" d="M1 2h26v19H12l-6 5v-5H1z"/></svg></button>
                <button aria-label="Narrative"><svg viewBox="0 0 28 28"><path d="M4 16v11h21V7l-7-6H3v4M17 1v7h8"/><circle class="b" cx="5" cy="11" r="3"/><path class="bs" d="M11 13h10M8 18h10"/></svg></button>
                <button aria-label="Goals"><svg viewBox="0 0 28 28"><path d="M7 3v9q1 7 7 7t7-7V3M7 5H1q0 8 7 9M21 5h6q0 8-7 9M12 19v5M16 19v5"/><path class="b" d="M7 1h14v3H7zM8 24h12v3H8z"/></svg></button>

                <button aria-label="Paginated report"><svg viewBox="0 0 28 28"><path d="M3-1h14l7 7v22H3zM16-1v8h8" stroke-width="2"/><path d="M9 25v-9M14 25v-5M19 25V14" stroke-width="3"/></svg></button>
                <button aria-label="Card (new)"><svg viewBox="0 0 28 28"><path d="M10 4h17v19H1V15"/><text x="5" y="19" class="t13">123</text><use href="#bolt" x="-1" y="-2" width="14" height="20" class="bolt"/></svg></button>
                <button aria-label="Slicer (new)"><svg viewBox="0 0 28 28"><path d="M14 1h11v10H14zM1 17v9h11V14M16 15h13l-5 6v7h-3v-7z"/><path class="b ns" d="M7 6h5v6H7z"/><use href="#bolt" x="-1" y="-2" width="14" height="20" class="bolt"/></svg></button>
                <button aria-label="ArcGIS map"><svg viewBox="0 0 28 28"><path class="bs" d="M11 1h16v11M1 14v13h18"/><path class="b ns" d="M2 27V17h9l1-7 7-4h8v4l-7 3-1 5-4 3-2 6z"/><path d="M-1 5q0-6 5-6t5 6q-1 6-5 11Q0 11-1 5z" fill="#e8770a" stroke="none"/><circle cx="4" cy="5" r="2" fill="#141414" stroke="none"/><circle cx="24" cy="24" r="4" fill="#e8770a" stroke="none"/><circle cx="27" cy="16" r="2" fill="#e8770a" stroke="none"/></svg></button>
                <button aria-label="Power Apps"><svg viewBox="0 0 28 28"><path stroke="#8a2490" d="M10 1h8l9 13-9 13h-8L1 14zM10 1l8 9-8 9-5-5M18 1l-8 9M10 27l8-9M10 19l8 8"/></svg></button>
                <button aria-label="Power Automate"><svg viewBox="0 0 28 28"><path stroke="#0f7fe0" d="M1 2h18l9 12-9 12H1l9-12zM1 26L19 2M9 2l10 12-8 12"/></svg></button>
            </div>
            <button class="more" aria-label="More visuals">...</button>

            <div class="wells">
                <h4>Columns</h4>
                <div class="well">
                    <div class="pill"><span>URL</span><svg width="13" height="13"><use href="#chevron"/></svg><svg width="11" height="11"><use href="#close"/></svg></div>
                    <div class="pill"><span>name</span><svg width="13" height="13"><use href="#chevron"/></svg><svg width="11" height="11"><use href="#close"/></svg></div>
                    <div class="pill"><span>events._num_pax</span><svg width="13" height="13"><use href="#chevron"/></svg><svg width="11" height="11"><use href="#close"/></svg></div>
                    <div class="pill"><span>Count(persons.pid)</span><svg width="13" height="13"><use href="#chevron"/></svg><svg width="11" height="11"><use href="#close"/></svg></div>
                </div>
                <h4 class="strong">Drill through</h4>
                <div class="switch-row"><label for="crossReport">Cross-report</label><label class="switch"><input type="checkbox" id="crossReport">Off</label></div>
                <div class="switch-row"><label for="keepFilters">Keep all filters</label><label class="switch on"><input type="checkbox" id="keepFilters" checked>On</label></div>
                <div class="drop-zone">Add drill-through fields here</div>
            </div>
        </aside>

        <aside class="fields">
            <div class="pane-title"><h2>Data</h2><button class="icon-btn" aria-label="Collapse data"><svg width="13" height="13"><use href="#collapse"/></svg></button></div>
            <label class="field-search"><svg width="22" height="22"><use href="#lens"/></svg><input type="text" placeholder="Search" aria-label="Search fields"></label>
            <div class="field-list">
                <div class="field-rows">
                    <label><input type="checkbox">created_source</label>
                    <label><input type="checkbox">eid</label>
                    <label><input type="checkbox">email</label>
                    <label><input type="checkbox">first_activated</label>
                    <label><input type="checkbox">first_invited</label>
                    <label><input type="checkbox">fname</label>
                    <label><input type="checkbox">is_activated</label>
                    <label><input type="checkbox">is_cancelled</label>
                    <label><input type="checkbox">is_hidden</label>
                    <label><input type="checkbox">is_invited</label>
                    <label><input type="checkbox">is_pending</label>
                    <label><input type="checkbox">last_activated</label>
                    <label><input type="checkbox">last_device</label>
                    <label><input type="checkbox">last_device_ty...</label>
                    <label><input type="checkbox">last_platform</label>
                    <label><input type="checkbox">lname</label>
                    <label><input type="checkbox">mobile</label>
                    <label><input type="checkbox">number_of_ac...</label>
                    <label><input type="checkbox">phone</label>
                    <label><input type="checkbox" checked>pid</label>
                    <label><input type="checkbox">position</label>
                    <label><input type="checkbox">region</label>
                    <label><input type="checkbox">self_registere...</label>
                    <label><input type="checkbox">team_member</label>
                    <label><input type="checkbox">unsubscribed_...</label>
                    <label><input type="checkbox">unsubscribed_...</label>
                    <label><input type="checkbox">updated_at</label>
                    <label><input type="checkbox">updated_source</label>
                </div>
                <i class="pane-thumb"></i>
            </div>
        </aside>
    </main>

    <footer class="status-bar">
        <span>Page 1 of 1</span>
        <div class="zoom">
            <button aria-label="Zoom out">-</button>
            <input type="range" min="0" max="100" value="42" aria-label="Zoom">
            <button aria-label="Zoom in">+</button>
            <span class="percent">84%</span>
            <svg width="22" height="16" viewBox="0 0 22 16"><path d="M1 1h20v14H1zM8 4H5v3M14 4h3v3M8 12H5V9M14 12h3V9"/></svg>
            <a href="#">Update available (click to download)</a>
        </div>
    </footer>
    <div class="window-edge"></div>
</body>
</html>
```
FILE: styles.css
```css
* {
    margin: 0;
    padding: 0;
    box-sizing: border-box;
    font-family: 'Segoe UI', 'Open Sans', 'Noto Sans', sans-serif;
}

body {
    display: flex;
    flex-direction: column;
    height: 100vh;
    overflow: hidden;
    background: #141414;
    border-left: 4px solid #1d1d1d;
    border-top: 1px solid #13202d;
    color: #e6e6e6;
    font-size: 17px;
}

button, input, select {
    font-size: inherit;
    color: inherit;
    background: none;
    border: none;
}

input:focus {
    outline: none;
}

a {
    color: inherit;
    text-decoration: none;
}

svg {
    fill: none;
    stroke: currentColor;
    stroke-width: 1.5;
    flex-shrink: 0;
    overflow: visible;
}

svg text {
    stroke: none;
    fill: currentColor;
}

h2 {
    font-size: 22px;
    font-weight: 600;
}

.defs {
    position: absolute;
    width: 0;
    height: 0;
}

.cells {
    stroke: none;
}

.up {
    transform: rotate(180deg);
}

.flip {
    transform: scaleX(-1);
}

.icon-btn {
    display: flex;
}

/* Title bar */

.title-bar {
    display: flex;
    align-items: center;
    height: 51px;
    padding: 0 22px 0 25px;
}

.quick-access {
    display: flex;
    gap: 22px;
    padding-bottom: 4px;
}

.dim {
    color: #555;
}

.doc-name {
    width: 978px;
    padding: 12px 0 0 12px;
}

.doc-name svg {
    margin-left: 6px;
    vertical-align: 6px;
}

.bullet {
    margin: 0 3px;
}

.top-search {
    display: flex;
    align-items: center;
    gap: 18px;
    width: 602px;
    height: 36px;
    padding-left: 26px;
    border-radius: 4px;
    background: #1f1f1f;
    font-size: 18px;
}

.top-search input::placeholder {
    color: #d0d0d0;
}

.window-controls {
    display: flex;
    align-items: center;
    margin-left: auto;
}

.sign-in {
    margin-right: 16px;
}

.avatar {
    display: flex;
    border-radius: 15px;
    background: #333;
}

.window-controls .icon-btn {
    margin-left: 49px;
}

/* Menu */

.menu {
    display: flex;
    align-items: center;
    gap: 35px;
    height: 54px;
    padding: 0 8px 4px 33px;
    font-size: 20px;
}

.menu a {
    padding: 6px 0 5px;
    border-bottom: 3px solid transparent;
}

.menu .active {
    margin-left: 14px;
    border-color: #2aac94;
    color: #fff;
    font-weight: 600;
}

.menu .context {
    color: #2aac94;
    font-weight: 600;
}

.share-btn {
    display: flex;
    align-items: center;
    justify-content: center;
    gap: 13px;
    width: 126px;
    height: 36px;
    margin-left: auto;
    border-radius: 5px;
    background: #0f6b5c;
    font-size: 17px;
}

/* Ribbon */

.ribbon {
    display: flex;
    position: relative;
    height: 150px;
    margin: 0 10px 0 12px;
    padding: 6px 0;
    border-radius: 12px;
    background: #292929;
    color: #f0f0f0;
}

.group {
    display: flex;
    flex-direction: column;
    align-items: center;
    border-right: 2px solid #3b3b3b;
}

.group h3 {
    margin-top: auto;
    padding-bottom: 2px;
    font-size: 15px;
    font-weight: 500;
    line-height: 20px;
}

.clipboard { width: 241px; }
.data { width: 555px; }
.queries { width: 177px; }
.insert { width: 221px; }
.calculations { width: 282px; }
.sensitivity { width: 111px; }
.share { width: 89px; }
.copilot { width: 90px; }

.tools {
    display: flex;
    gap: 2px;
}

.clipboard .tools {
    gap: 0;
}

.tool {
    display: flex;
    flex-direction: column;
    align-items: center;
    gap: 5px;
    min-width: 60px;
    padding: 8px 2px 0;
    line-height: 24px;
    white-space: nowrap;
}

.disabled {
    color: #5c5c5c;
}

.caret {
    width: 9px;
    height: 9px;
    margin-left: 4px;
    stroke-width: 2;
}

.stack {
    display: flex;
    flex-direction: column;
    gap: 15px;
    padding: 7px 0 0 4px;
}

.row-tool {
    display: flex;
    align-items: center;
    gap: 5px;
    height: 24px;
    white-space: nowrap;
}

.badge-letter {
    fill: #fff;
    font-size: 15px;
    font-weight: 700;
}

.fx {
    font-family: 'Liberation Serif', serif;
    font-size: 28px;
    font-style: italic;
}

.collapse-ribbon {
    position: absolute;
    right: 12px;
    bottom: 12px;
    display: flex;
}

/* Main */

.main {
    display: flex;
    flex: 1;
    min-height: 0;
}

.rail {
    width: 61px;
    border-right: 1px solid #444;
}

.rail a {
    display: flex;
    align-items: center;
    justify-content: center;
    height: 60px;
    padding-right: 2px;
    border-left: 4px solid transparent;
}

.rail .active {
    border-color: #2aac94;
}

.dax {
    font-size: 10px;
    font-weight: 600;
}

.workspace {
    display: flex;
    flex-direction: column;
    flex: 1;
    min-width: 0;
}

.work-row {
    display: flex;
    flex: 1;
    min-height: 0;
}

.canvas {
    flex: 1;
    min-width: 0;
    overflow: hidden;
    background: #fff;
    color: #252423;
}

.report-page {
    margin: 0 12px 0 10px;
    padding-left: 21px;
    border: 3px dotted #444;
    border-top: none;
}

.page-top {
    display: flex;
    height: 487px;
    margin-left: -21px;
}

.pie-visual h2 {
    height: 30px;
    padding-left: 17px;
    font-family: 'DIN', 'Roboto', sans-serif;
    font-size: 21px;
    font-weight: 400;
    line-height: 30px;
}

.pie {
    stroke: none;
}

.pie text {
    fill: #605e5c;
    font-size: 14px;
}

.pie .leader {
    stroke: #a6a6a6;
    stroke-width: 1;
}

.legend {
    flex: 1;
    padding: 144px 0 0 21px;
    color: #605e5c;
    font-size: 16px;
}

.legend h4 {
    font-weight: 600;
    line-height: 24px;
}

.legend ul {
    list-style: none;
}

.legend li {
    display: flex;
    align-items: center;
    gap: 3px;
    height: 32px;
    white-space: nowrap;
}

.legend li::before {
    content: '';
    width: 13px;
    height: 13px;
    border-radius: 50%;
    background: currentColor;
}

.legend .c1::before { background: #118dff; }
.legend .c2::before { background: #12239e; }
.legend .c3::before { background: #e66c37; }
.legend .c4::before { background: #6b007b; }
.legend .c5::before { background: #e044a7; }
.legend .c6::before { background: #744ec2; }

.map-grid {
    stroke: #333;
    stroke-dasharray: 2 18.33;
}

.table-visual {
    position: relative;
    height: 427px;
    padding: 1px 59px 0 5px;
    border: 2px solid #3b3a39;
}

.visual-header {
    position: absolute;
    right: 8px;
    top: -28px;
    display: flex;
    align-items: center;
    gap: 23px;
    color: #605e5c;
}

.table-visual table {
    width: 100%;
    border-collapse: collapse;
    table-layout: fixed;
    font-size: 16px;
    line-height: 21px;
}

.table-visual th {
    position: relative;
    height: 40px;
    padding: 0 6px 5px;
    border-bottom: 2px solid #62aff2;
    font-weight: 400;
    text-align: left;
}

.url { width: 459px; }
.num { width: 157px; }
.table-visual .head-pax { width: 149px; padding-right: 18px; }

.sort {
    position: absolute;
    left: 7px;
    bottom: 4px;
    border: 5px solid transparent;
    border-top: none;
    border-bottom: 6px solid #252423;
}

.table-visual td {
    height: 47px;
    padding: 3px 6px 0;
    vertical-align: top;
}

.table-visual tbody tr:nth-child(even) {
    background: #ececec;
}

.table-visual .cut td {
    height: 25px;
    padding-top: 2px;
}

.table-visual tfoot td {
    height: 30px;
    padding-top: 3px;
    border-top: 2px solid #62aff2;
    font-weight: 700;
}

.table-visual .num {
    text-align: right;
}

.redacted {
    display: block;
    stroke: none;
}

.url-mask {
    position: absolute;
    left: 299px;
    top: 47px;
    stroke: none;
}

.thumb {
    position: absolute;
    right: 5px;
    top: 6px;
    width: 8px;
    height: 82px;
    border-radius: 4px;
    background: #b3b0ad;
}

.handle {
    position: absolute;
    width: 14px;
    height: 14px;
    border: 0 solid #8e8e8e;
}

.tl { left: -3px; top: -3px; border-width: 5px 0 0 5px; }
.tr { right: -3px; top: -3px; border-width: 5px 5px 0 0; }
.bl { left: -3px; bottom: -3px; border-width: 0 0 5px 5px; }
.br { right: -3px; bottom: -3px; border-width: 0 5px 5px 0; }
.top { left: calc(50% - 9px); top: -4px; width: 18px; border-top-width: 6px; }
.bottom { left: calc(50% - 9px); bottom: -4px; width: 18px; border-bottom-width: 6px; }
.left { left: -4px; top: 48%; height: 18px; border-left-width: 6px; }
.right { right: -4px; top: 48%; height: 18px; border-right-width: 6px; }

/* Filters pane */

.filters {
    display: flex;
    flex-direction: column;
    width: 302px;
    border-left: 2px solid #b8b6b4;
    background: #fff;
    color: #252423;
}

.filters-head {
    padding: 9px 18px 6px 11px;
    border-bottom: 1px solid #a6a6a6;
}

.pane-title {
    display: flex;
    align-items: center;
    height: 40px;
}

.pane-title button svg {
    stroke-width: 3;
}

.filters-head .pane-title {
    gap: 15px;
    padding-left: 7px;
}

.pane-title h2 {
    margin-right: auto;
}

.filters .pane-title .icon-btn {
    margin-left: 15px;
}

.filter-search {
    display: flex;
    align-items: center;
    gap: 24px;
    height: 46px;
    margin-top: 20px;
    padding-left: 18px;
    border: 1px solid #8a8886;
    border-radius: 2px;
}

.filter-search input, .field-search input {
    width: 150px;
    font-size: 18px;
}

.filter-search input::placeholder {
    color: #252423;
}

.filters-body {
    position: relative;
    flex: 1;
    min-height: 0;
    overflow: hidden;
    padding: 21px 12px 0 11px;
}

.section-label {
    display: flex;
    justify-content: space-between;
    height: 42px;
    padding: 5px 8px 0 0;
}

.card {
    height: 68px;
    margin-bottom: 10px;
    padding: 5px 12px;
    border: 1px solid #b8b6b4;
    border-radius: 2px;
    line-height: 27px;
}

.card.set {
    background: #f3f2f1;
}

.card.set > p:first-child, .open .card-line:first-child p {
    font-weight: 700;
}

.card.open {
    height: 421px;
}

.card-line {
    display: flex;
    align-items: center;
    gap: 19px;
    padding-right: 6px;
    white-space: nowrap;
}

.card-line svg {
    color: #605e5c;
}

.card-line p {
    margin-right: auto;
}

.card-line.second {
    gap: 17px;
}

.field-label {
    display: block;
    height: 36px;
    padding-top: 6px;
}

.card-line + .field-label {
    height: 45px;
    padding-top: 13px;
}

.field-label svg {
    margin-left: 3px;
    stroke-width: 1;
}

.select {
    position: relative;
    width: 255px;
    height: 37px;
    margin-right: -8px;
}

.select select, .value {
    width: 100%;
    height: 100%;
    padding-left: 10px;
    border: 1px solid #b8b6b4;
    border-radius: 2px;
    background: #fff;
    appearance: none;
}

.select svg {
    position: absolute;
    right: 7px;
    top: 10px;
    pointer-events: none;
}

.condition {
    padding: 4px 0 0 3px;
}

.condition .select, .value {
    width: 250px;
    height: 36px;
    margin-top: 5px;
}

.value {
    height: 39px;
}

.radios {
    display: flex;
    gap: 14px;
    padding: 18px 0 14px 1px;
}

.radios label {
    display: flex;
    align-items: center;
    gap: 14px;
}

.radios input {
    width: 15px;
    height: 15px;
    border: 1px solid #252423;
    border-radius: 50%;
    background: #fff;
    appearance: none;
}

.radios input:checked {
    box-shadow: inset 0 0 0 2px #fff;
    background: #252423;
}

.apply {
    display: block;
    margin: 14px -3px 0 auto;
    color: #a19f9d;
}

.pane-thumb {
    position: absolute;
    right: 1px;
    top: 13px;
    width: 8px;
    height: 528px;
    border-radius: 4px;
    background: #d6d6d6;
}

/* Page tabs */

.page-tabs {
    display: flex;
    height: 53px;
    background: #292929;
    color: #fff;
}

.layout-btn {
    display: flex;
    justify-content: center;
    width: 38px;
    margin-left: 13px;
    padding-top: 11px;
}

.layout-btn.active {
    height: 48px;
    border-bottom: 4px solid #2aac94;
}

.layout-btn.phone {
    margin: 0 10px 0 28px;
    padding-top: 9px;
}

.arrow {
    width: 32px;
    padding-top: 4px;
}

.page-tab {
    width: 116px;
    border-left: 1px solid #555;
    border-bottom: 6px solid #2aac94;
    padding-top: 9px;
    font-weight: 700;
}

.add-page {
    width: 58px;
    background: #2aac94;
    color: #1f1f1f;
}

/* Visualizations pane */

.viz {
    width: 273px;
    border-left: 1px solid #8a8a8a;
    border-right: 2px solid #666;
    color: #fff;
}

.viz .pane-title {
    margin-top: 9px;
    padding: 0 15px 0 12px;
}

.viz h3 {
    height: 37px;
    padding-left: 12px;
    font-size: 16px;
    font-weight: 700;
    line-height: 40px;
}

.viz-tabs {
    display: flex;
    justify-content: space-between;
    padding: 0 12px;
    color: #b5b5b5;
}

.viz-tabs button {
    display: flex;
    align-items: center;
    justify-content: center;
    width: 48px;
    height: 48px;
    border-radius: 4px;
}

.viz-tabs .active {
    background: #2b2b2b;
}

.notch {
    display: block;
    margin: 6px 0 0 24px;
    color: #777;
}

.viz-grid {
    display: grid;
    grid-template-columns: repeat(6, 42px);
    grid-auto-rows: 42px;
    padding: 10px 0 0 9px;
    border-top: 1px solid #777;
    color: #e1e1e1;
}

.viz-grid button {
    display: flex;
    align-items: center;
    justify-content: center;
}

.viz-grid svg {
    width: 28px;
    height: 28px;
}

.viz-grid .selected {
    width: 36px;
    height: 36px;
    margin: 3px;
    border: 2px solid #e6e6e6;
}

.viz-grid .b { fill: #0063b1; stroke: #83beec; }
.viz-grid .b.ns { stroke: none; }
.viz-grid .g { fill: #605e5c; stroke: #8a8886; }
.viz-grid .bs { stroke: #62aff2; }

.bolt {
    fill: #f9c27a;
    stroke: #e8770a;
}

.t13 {
    font-size: 12px;
    fill: #4aa0e6;
}

.viz-grid .letter {
    padding-bottom: 2px;
    color: #3a96dd;
    font-size: 22px;
    font-weight: 600;
}

.more {
    display: block;
    height: 47px;
    padding: 0 0 20px 22px;
    font-size: 20px;
    font-weight: 700;
    line-height: 20px;
}

.wells {
    padding: 8px 8px 0 6px;
    border-top: 1px solid #ccc;
}

.wells h4 {
    padding-left: 12px;
    font-weight: 400;
    line-height: 35px;
}

.wells .strong {
    margin-top: 12px;
    font-weight: 600;
}

.well {
    display: flex;
    flex-direction: column;
    gap: 3px;
    height: 168px;
    margin-top: 2px;
    padding: 5px 3px;
    border: 1px dashed #8a8a8a;
}

.pill {
    display: flex;
    align-items: center;
    gap: 18px;
    height: 35px;
    padding: 0 8px 0 7px;
    border: 1px solid #6a6a6a;
    border-radius: 2px;
    background: #1f1f1f;
}

.pill span {
    margin-right: auto;
}

.pill svg {
    stroke-width: 2;
}

.switch-row {
    display: flex;
    align-items: center;
    justify-content: space-between;
    height: 41px;
    padding: 0 24px 0 12px;
}

.switch {
    display: flex;
    align-items: center;
    justify-content: center;
    gap: 3px;
    width: 48px;
    height: 24px;
    border: 1px solid #b0b0b0;
    border-radius: 12px;
    color: #b0b0b0;
    font-size: 14px;
}

.switch input {
    width: 12px;
    height: 12px;
    border-radius: 50%;
    background: #b0b0b0;
    appearance: none;
}

.switch.on {
    flex-direction: row-reverse;
    border-color: #2aac94;
    background: #2aac94;
    color: #1f3f39;
}

.switch.on input {
    background: #292929;
}

.drop-zone {
    height: 39px;
    margin-top: 7px;
    border: 1px dashed #8a8a8a;
    background: #000;
    line-height: 37px;
    text-align: center;
    white-space: nowrap;
}

/* Data pane */

.fields {
    display: flex;
    flex-direction: column;
    width: 269px;
    color: #fff;
}

.fields .pane-title {
    height: 60px;
    padding: 0 13px 0 12px;
}

.field-search {
    display: flex;
    align-items: center;
    gap: 10px;
    height: 36px;
    margin: 8px 4px 0 6px;
    padding-left: 18px;
    border: 1px solid #666;
    border-bottom-color: #aaa;
    border-radius: 4px;
    background: #242424;
    color: #999;
}

.field-search input::placeholder {
    color: #999;
}

.field-list {
    position: relative;
    display: flex;
    flex: 1;
    min-height: 0;
    margin-top: 12px;
    padding-bottom: 11px;
    overflow: hidden;
}

.field-rows {
    display: flex;
    flex-direction: column;
    flex: 1;
    margin-top: -18px;
    padding-left: 66px;
}

.field-rows label {
    display: flex;
    flex: 1;
    align-items: center;
    gap: 39px;
    min-height: 0;
    white-space: nowrap;
}

.field-rows input {
    width: 18px;
    height: 18px;
    border: 1px solid #b0b0b0;
    border-radius: 3px;
    appearance: none;
}

.field-rows input:checked {
    border-color: #2aac94;
    background: #2aac94;
}

.field-rows input:checked::after {
    content: '';
    display: block;
    width: 5px;
    height: 9px;
    margin: 1px 0 0 5px;
    border: solid #1f1f1f;
    border-width: 0 2px 2px 0;
    transform: rotate(45deg);
}

.field-list .pane-thumb {
    right: 4px;
    top: auto;
    bottom: 11px;
    width: 12px;
    height: 545px;
    border-radius: 0;
    background: #3c3c3c;
}

/* Status bar */

.status-bar {
    display: flex;
    align-items: center;
    justify-content: space-between;
    height: 36px;
    padding: 3px 7px 0 4px;
    border-top: 2px solid #555;
}

.zoom {
    display: flex;
    align-items: center;
}

.zoom input {
    width: 151px;
    height: 18px;
    margin: 0 8px 0 6px;
    background: linear-gradient(#ccc, #ccc) center / 100% 2px no-repeat;
    appearance: none;
}

.zoom input::-webkit-slider-thumb {
    width: 5px;
    height: 17px;
    background: #e6e6e6;
    appearance: none;
}

.percent {
    margin: 0 30px 0 20px;
}

.zoom a {
    margin-left: 24px;
}

.window-edge {
    width: 50%;
    height: 5px;
    margin-left: 8px;
    border-top: 2px solid #fff;
    border-bottom: 3px solid #1a1a1a;
}
```
